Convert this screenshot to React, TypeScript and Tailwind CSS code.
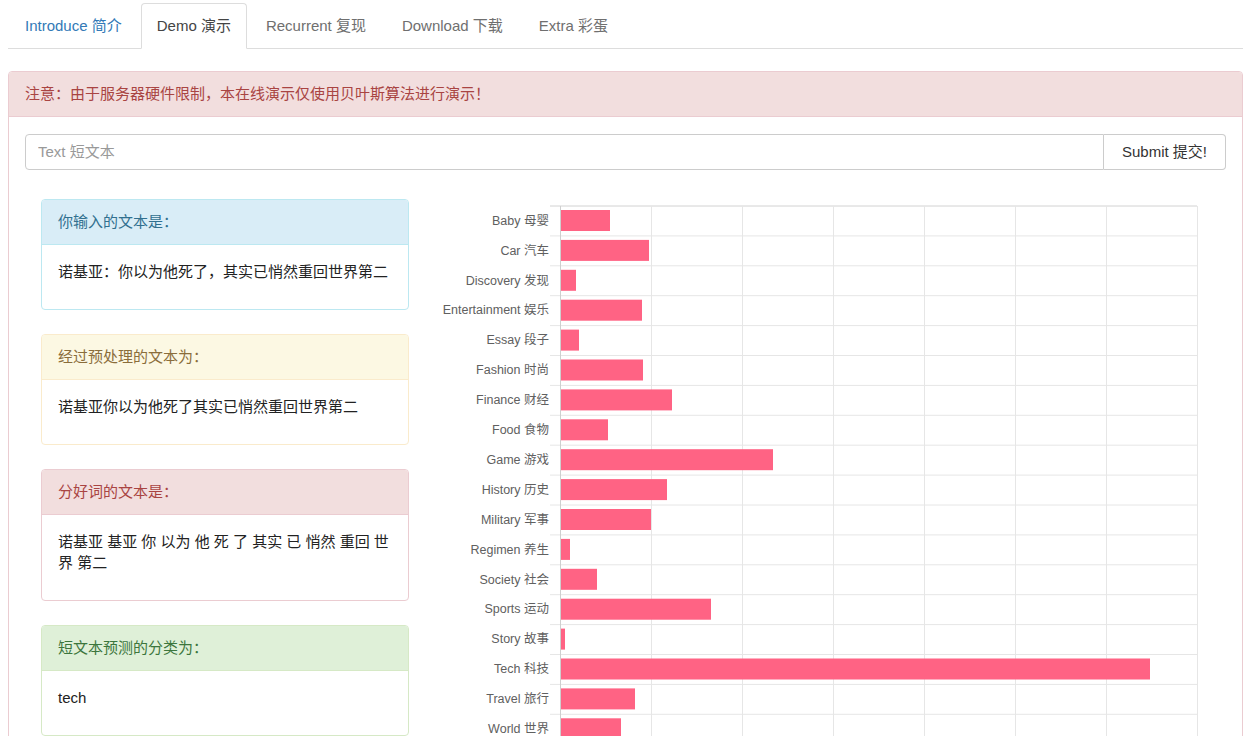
import React from "react";

const tabs = [
  { label: "Introduce 简介", cls: "px-[16px] text-[#337ab7] border-transparent" },
  { label: "Demo 演示", cls: "px-[15px] text-[#444] border-[#ddd] border-b-white bg-white" },
  { label: "Recurrent 复现", cls: "px-[16px] text-[#6f6f6f] border-transparent" },
  { label: "Download 下载", cls: "px-[16px] text-[#6f6f6f] border-transparent" },
  { label: "Extra 彩蛋", cls: "px-[16px] text-[#6f6f6f] border-transparent" },
];

const data: [string, number][] = [
  ["Baby 母婴", 49],
  ["Car 汽车", 88],
  ["Discovery 发现", 15],
  ["Entertainment 娱乐", 81],
  ["Essay 段子", 18],
  ["Fashion 时尚", 82],
  ["Finance 财经", 111],
  ["Food 食物", 47],
  ["Game 游戏", 212],
  ["History 历史", 106],
  ["Military 军事", 90],
  ["Regimen 养生", 9],
  ["Society 社会", 36],
  ["Sports 运动", 150],
  ["Story 故事", 4],
  ["Tech 科技", 589],
  ["Travel 旅行", 74],
  ["World 世界", 60],
];

function Panel({
  title,
  head,
  border,
  children,
}: {
  title: string;
  head: string;
  border: string;
  children: React.ReactNode;
}) {
  return (
    <div className={`border rounded-[4px] bg-white ${border}`}>
      <div className={`h-[45px] flex items-center px-[16px] text-[15px] border-b rounded-t-[3px] ${head}`}>
        {title}
      </div>
      <div className="px-[16px] pt-[16px] pb-[27px] text-[15px] leading-[21px] text-[#222]">{children}</div>
    </div>
  );
}

function Chart() {
  const x0 = 130;
  const top = 11;
  const rowH = 29.9;
  const colW = 91;
  const right = x0 + colW * 7;
  const rows = data.length;
  const bottom = top + rowH * rows;
  return (
    <svg width={790} height={560} className="block">
      {Array.from({ length: rows + 1 }).map((_, j) => (
        <line
          key={"h" + j}
          x1={x0 - 10}
          x2={right}
          y1={top + rowH * j}
          y2={top + rowH * j}
          stroke={j === 0 ? "#d2d2d2" : "#e6e6e6"}
          strokeWidth={1}
        />
      ))}
      {Array.from({ length: 8 }).map((_, i) => (
        <line
          key={"v" + i}
          x1={x0 + colW * i + 0.5}
          x2={x0 + colW * i + 0.5}
          y1={top}
          y2={bottom + 10}
          stroke={i === 0 ? "#cfcfcf" : "#e6e6e6"}
          strokeWidth={1}
        />
      ))}
      {data.map(([label, w], j) => {
        const yTop = top + rowH * j;
        return (
          <g key={label}>
            <rect x={x0 + 1} y={yTop + 4} width={w} height={21} fill="#ff6384" />
            <text
              x={x0 - 11}
              y={yTop + rowH / 2 + 0.5}
              textAnchor="end"
              dominantBaseline="middle"
              fontSize={12.5}
              fill="#606060"
            >
              {label}
            </text>
          </g>
        );
      })}
    </svg>
  );
}

export default function App() {
  return (
    <div className="h-[736px] overflow-hidden bg-white px-2 font-['Liberation_Sans','Noto_Sans_CJK_SC',sans-serif]">
      <div className="flex pt-[3px] border-b border-[#ddd]">
        {tabs.map((t) => (
          <div
            key={t.label}
            className={`-mb-px mr-[2px] h-[46px] flex items-center text-[15px] border rounded-t-[4px] ${t.cls}`}
          >
            {t.label}
          </div>
        ))}
      </div>

      <div className="mt-[22px] border border-[#ebccd1] rounded-[4px]">
        <div className="h-[45px] flex items-center px-[16px] bg-[#f2dede] text-[#a94442] text-[15px] border-b border-[#ebccd1] rounded-t-[3px]">
          注意：由于服务器硬件限制，本在线演示仅使用贝叶斯算法进行演示！
        </div>
        <div className="px-[16px] pt-[17px] pb-[40px]">
          <div className="flex h-[36px]">
            <input
              className="flex-1 border border-[#ccc] rounded-l-[4px] px-[12px] text-[15px] text-[#555] placeholder:text-[#999] outline-none"
              placeholder="Text 短文本"
            />
            <button className="w-[122px] border border-l-0 border-[#ccc] rounded-r-[4px] bg-white text-[15px] text-[#333]">
              Submit 提交!
            </button>
          </div>

          <div className="flex">
            <div className="ml-[16px] mt-[29px] w-[368px] flex flex-col gap-6 shrink-0">
              <Panel title="你输入的文本是：" head="bg-[#d9edf7] text-[#31708f] border-[#bce8f1]" border="border-[#bce8f1]">
                诺基亚：你以为他死了，其实已悄然重回世界第二
              </Panel>
              <Panel title="经过预处理的文本为：" head="bg-[#fcf8e3] text-[#8a6d3b] border-[#faebcc]" border="border-[#faebcc]">
                诺基亚你以为他死了其实已悄然重回世界第二
              </Panel>
              <Panel title="分好词的文本是：" head="bg-[#f2dede] text-[#a94442] border-[#ebccd1]" border="border-[#ebccd1]">
                诺基亚 基亚 你 以为 他 死 了 其实 已 悄然 重回 世
                <br />
                界 第二
              </Panel>
              <Panel title="短文本预测的分类为：" head="bg-[#dff0d8] text-[#3c763d] border-[#d6e9c6]" border="border-[#d6e9c6]">
                tech
              </Panel>
            </div>
            <div className="ml-[21px] mt-[25px]">
              <Chart />
            </div>
          </div>
        </div>
      </div>
    </div>
  );
}
